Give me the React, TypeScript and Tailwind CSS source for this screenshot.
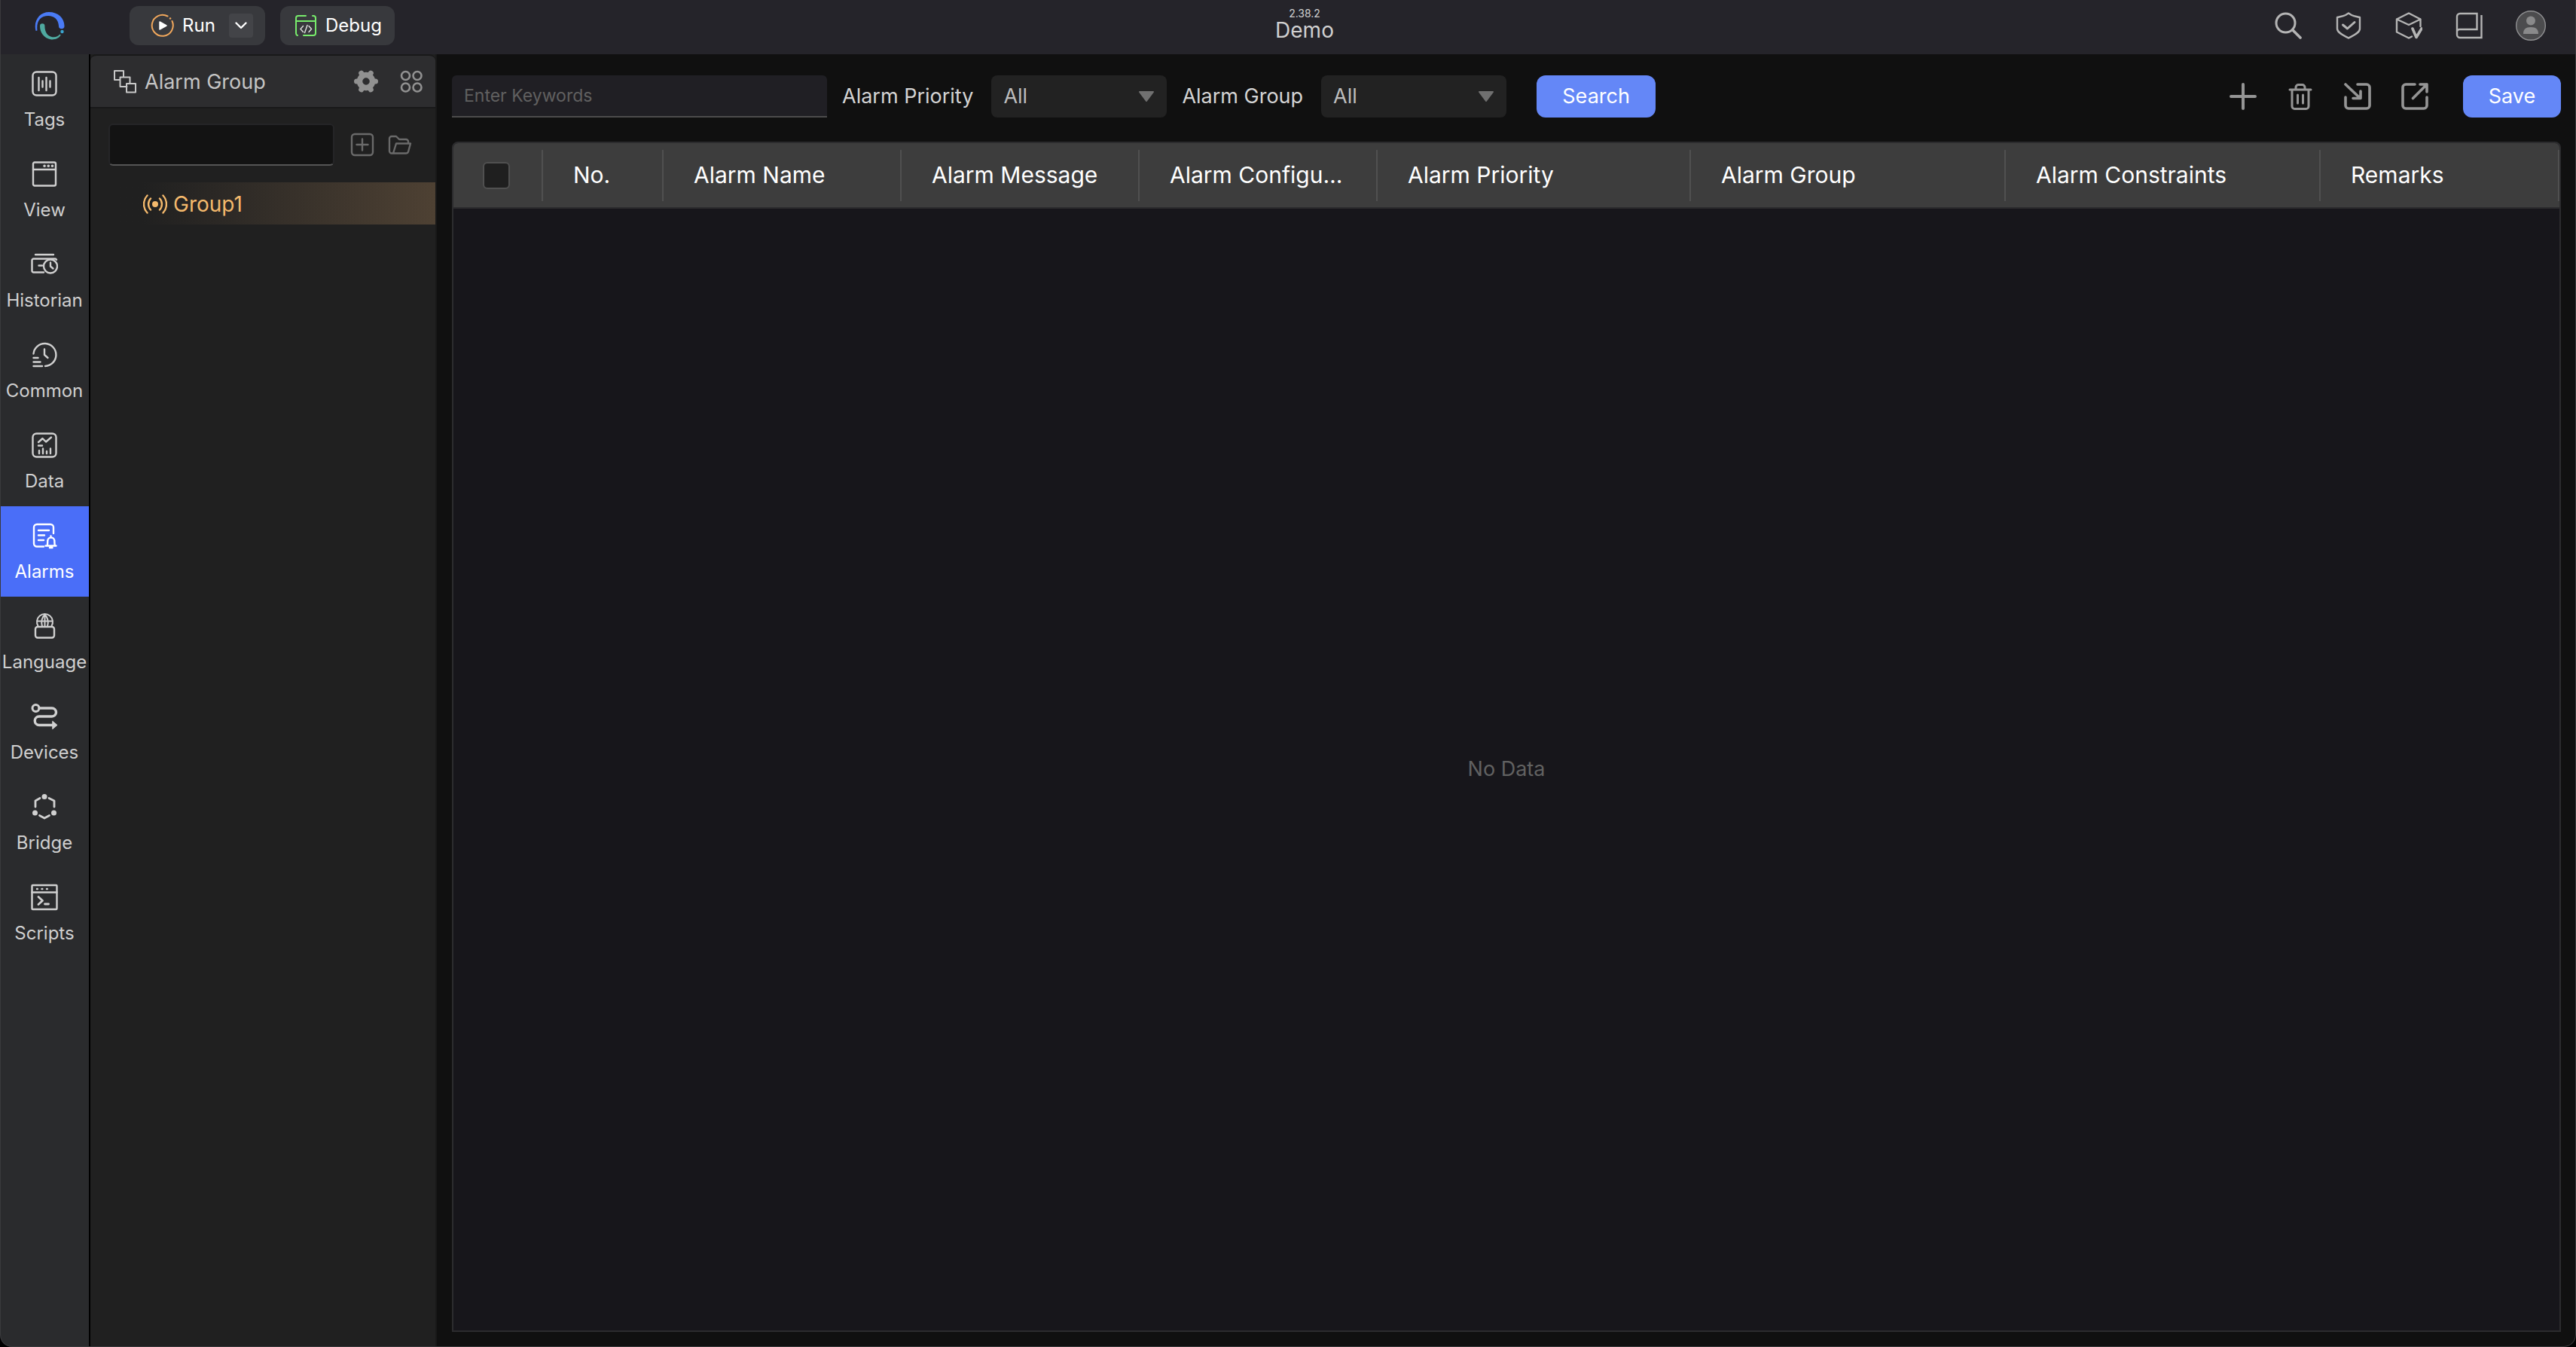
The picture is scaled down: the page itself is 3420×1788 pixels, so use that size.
import { ReactNode } from "react";

interface IconProps {
  className?: string;
  children: ReactNode;
  box?: string;
}

// Line icon on a 36px grid
function Icon({ className = "size-9", box = "0 0 36 36", children }: IconProps) {
  return (
    <svg
      viewBox={box}
      className={className}
      fill="none"
      stroke="currentColor"
      strokeWidth="2.4"
      strokeLinecap="round"
      strokeLinejoin="round"
      aria-hidden="true"
    >
      {children}
    </svg>
  );
}

const navItems: { label: string; icon: ReactNode }[] = [
  {
    label: "Tags",
    icon: (
      <>
        <rect x="2.5" y="2.5" width="31" height="31" rx="5" />
        <path d="M10.5 10v17M15.5 14.5v8M20.5 10v17M25.5 14.5v8" />
      </>
    ),
  },
  {
    label: "View",
    icon: (
      <>
        <rect x="3" y="2.5" width="30" height="31" rx="2" />
        <path d="M3 12h30" />
        <path d="M18 7.3h.1M23.2 7.3h.1M28.4 7.3h.1" strokeWidth="3.6" />
      </>
    ),
  },
  {
    label: "Historian",
    icon: (
      <>
        <path d="M6 5h24" />
        <path d="M17 28.5H3.5a2 2 0 0 1-2-2V12.5a2 2 0 0 1 2-2h28.500a2 2 0 0 1 2 1.200" />
        <circle cx="26" cy="20.5" r="9" />
        <path d="M26 15.5v5l3.500 3M10.500 19.500h4.500" />
      </>
    ),
  },
  {
    label: "Common",
    icon: (
      <>
        <path d="M3.500 16.500A15 15 0 1 1 19 33" />
        <path d="M18 10.500v7.500l4.500 4" />
        <path d="M3.500 22h6M3.500 27.500h9M3.500 33h11.500" />
      </>
    ),
  },
  {
    label: "Data",
    icon: (
      <>
        <rect x="2.5" y="2.5" width="31" height="31" rx="5" />
        <path d="M10 14l5.500-5 4.500 4.500 7-6M10 18.500h5" />
        <path d="M11 25v4M16 22.500v6.500M21 26v3M26 22.500v6.500" />
      </>
    ),
  },
  {
    label: "Alarms",
    icon: (
      <>
        <path d="M17 32.500H8a4 4 0 0 1-4-4V7a4 4 0 0 1 4-4h18a4 4 0 0 1 4 4v8" />
        <path d="M10 11h14M10 17.500h8M10 24h7" />
        <path d="M19.500 31.500h14M21.500 31.500c1-2 .500-4 .800-6.500a4.500 4.500 0 0 1 9 0c.3 2.500-.2 4.500.8 6.500M26.500 18.500v2M25 34h3.500" />
      </>
    ),
  },
  {
    label: "Language",
    icon: (
      <>
        <rect x="6" y="19" width="25" height="14.5" rx="3" />
        <g strokeWidth="2">
          <path d="M9.500 18a10.500 10.500 0 1 1 18 0" />
          <path d="M15 18.500c-1.500-6-.5-12 3.500-15.800 4 3.800 5 9.800 3.500 15.800M18.500 2.700v16M8.500 11.500h20" />
        </g>
      </>
    ),
  },
  {
    label: "Devices",
    icon: (
      <>
        <circle cx="6.5" cy="7" r="4.5" strokeWidth="3" />
        <path d="M11 7h17a5.300 5.300 0 0 1 0 11H11a5.500 5.500 0 0 0 0 11.500h18" strokeWidth="3.4" />
        <path d="M29 24.500l6 5-6 5z" fill="currentColor" strokeWidth="1" />
      </>
    ),
  },
  {
    label: "Bridge",
    icon: (
      <>
        <path d="M12 6.500l-6 3.500v8M24 6.500l7 3.500v8M11.500 29.500l6.500 3.500 6.500-3.500" strokeWidth="2.8" />
        <circle cx="18" cy="4.5" r="3.5" fill="currentColor" stroke="none" />
        <circle cx="5.5" cy="26" r="3.5" fill="currentColor" stroke="none" />
        <circle cx="30.5" cy="26" r="3.5" fill="currentColor" stroke="none" />
      </>
    ),
  },
  {
    label: "Scripts",
    icon: (
      <>
        <rect x="1.5" y="2" width="33" height="32" rx="1" />
        <path d="M1.500 11.500h33M8 7h.8M14.500 7h.8M21 7h.8" />
        <path d="M10 17.500l5.500 5-5.500 5M18.500 27h5" strokeWidth="2.8" />
      </>
    ),
  },
];

const columns = [
  { label: "No.", width: "w-40" },
  { label: "Alarm Name", width: "w-[316px]" },
  { label: "Alarm Message", width: "w-[316px]" },
  { label: "Alarm Configuration", width: "w-[316px]" },
  { label: "Alarm Priority", width: "w-[416px]" },
  { label: "Alarm Group", width: "w-[418px]" },
  { label: "Alarm Constraints", width: "w-[418px]" },
  { label: "Remarks", width: "" },
];

function TopBar() {
  return (
    <header className="flex h-[72px] shrink-0 items-center justify-between bg-[#25242a] pr-10 pb-1">
      <div className="flex flex-1 items-center">
        <svg viewBox="0 0 40 38" className="ml-[46px] h-[38px] w-10" fill="none" aria-hidden="true">
          <path d="M1.500 26C-2 12 7 1 19 1c12 0 20.500 8 20.500 18.500a3.500 3.500 0 0 1-7.500 0C31.500 11 26 6 18 6 8 6 2 13 3.500 25.500z" fill="#4a7bf5" />
          <path d="M7 19.500a3.200 3.200 0 0 1 6.400 0c0 8 3.600 13.500 10.100 14.700 4.500.6 7.500-1 10-3.700l1.200 1C32 36 27 37.800 22 37.400 12 36 7 28 7 19.500z" fill="#4fa9a0" />
          <circle cx="36.5" cy="27" r="2.2" fill="#3aa6d0" />
        </svg>
        <div className="ml-[86px] flex h-[52px] w-[180px] items-center rounded-xl bg-[#38393d] text-2xl text-white">
          <button type="button" className="flex flex-1 items-center gap-2.5 pl-7">
            <svg viewBox="0 0 32 32" className="size-8" fill="none" aria-hidden="true">
              <path d="M22.500 3.500A14 14 0 1 0 28.500 10" stroke="#f0a75c" strokeWidth="2" strokeLinecap="round" />
              <circle cx="26" cy="6.5" r="1.3" fill="#f0a75c" />
              <path d="M12 11v10l9-5z" fill="#fff" stroke="#fff" strokeWidth="1.5" strokeLinejoin="round" />
            </svg>
            Run
          </button>
          <button type="button" aria-label="Run options" className="mr-4 flex size-8 items-center justify-center rounded bg-[#434448]">
            <Icon className="size-5" box="0 0 20 20">
              <path d="M3.500 6.500l6.500 6.500 6.500-6.500" />
            </Icon>
          </button>
        </div>
        <button type="button" className="ml-5 flex h-[52px] w-38 items-center gap-3 rounded-xl bg-[#38393d] pl-5 text-2xl text-white">
          <svg viewBox="0 0 28 28" className="size-7" fill="none" strokeWidth="2" strokeLinecap="round" aria-hidden="true">
            <path d="M14 1H4a3 3 0 0 0-3 3v20a3 3 0 0 0 2 3M23 1h1a3 3 0 0 1 3 3v20a3 3 0 0 1-3 3H11M1 8h26" stroke="#78ec6c" />
            <path d="M10.500 14.500l-3.500 4 3.500 4M18 14.500l3.500 4-3.500 4M16 13.500l-3.500 10" stroke="#e4e4e4" strokeWidth="1.4" />
          </svg>
          Debug
        </button>
      </div>
      <div className="ml-[84px] flex flex-col items-center pb-1 text-[#d0d0d0]">
        <span className="text-sm leading-4">2.38.2</span>
        <h1 className="text-[28px] leading-7">Demo</h1>
      </div>
      <div className="flex flex-1 items-center justify-end gap-11 text-[#b4b4b4]">
        <button type="button" aria-label="Search">
          <Icon>
            <circle cx="14.5" cy="14.5" r="12.5" strokeWidth="3" />
            <path d="M24 24l10 10" strokeWidth="3.6" />
          </Icon>
        </button>
        <button type="button" aria-label="Security">
          <Icon>
            <path d="M18 1.500l4 2.500c3 1.500 7 2 11 3v15c0 6-9 9-15 12.500C12 31 3 28 3 22V7c4-1 8-1.500 11-3z" />
            <path d="M10.500 17l6 5 9.500-8.500" strokeWidth="3" />
          </Icon>
        </button>
        <button type="button" aria-label="Version">
          <Icon>
            <path d="M18 34.500L2 26.500V9.500l16-8 15.500 8V19M2 9.500l16 7.500 15.500-7.500M18 34.500l4-2" />
            <path d="M23 22l5 11.500 7-11.500" strokeWidth="3.6" />
          </Icon>
        </button>
        <button type="button" aria-label="Manual">
          <Icon>
            <path d="M34.500 4v30H6a4 4 0 0 1-4-4V6a4 4 0 0 1 4-4h22.500v21H6a3.500 3.500 0 0 0-4 4" strokeLinecap="butt" strokeLinejoin="miter" />
          </Icon>
        </button>
        <button type="button" aria-label="Account">
          <svg viewBox="0 0 40 40" className="size-10" aria-hidden="true">
            <circle cx="20" cy="20" r="19.3" fill="#4c4c4e" stroke="#909092" strokeWidth="1.4" />
            <circle cx="20" cy="13.5" r="6" fill="#8a8a8b" />
            <path d="M10 31c0-6 3-9 10-9s10 3 10 9z" fill="#8a8a8b" />
          </svg>
        </button>
      </div>
    </header>
  );
}

function SideNav() {
  return (
    <nav className="w-30 shrink-0 border-r-2 border-black bg-[#2a2b2d]">
      {navItems.map((item) => (
        <a
          key={item.label}
          href={`#${item.label.toLowerCase()}`}
          className={
            item.label === "Alarms"
              ? "flex h-30 flex-col items-center gap-4 bg-[#4a6ef8] pt-[21px] text-white"
              : "flex h-30 flex-col items-center gap-4 pt-[21px] text-[#d0d0d0]"
          }
        >
          <Icon>{item.icon}</Icon>
          <span className="text-2xl leading-7">{item.label}</span>
        </a>
      ))}
    </nav>
  );
}

function GroupPanel() {
  return (
    <aside className="w-[460px] shrink-0 border-r-2 border-[#191919] bg-[#202020]">
      <div className="flex h-[72px] items-center rounded-t-lg border-y-2 border-[#191919] bg-[#2d2d2f] pr-4 pl-[30px]">
        <Icon className="size-8 text-[#c8c8c8]" box="0 0 32 32">
          <path d="M8.500 14H2V2h12v7.500M18.500 23H9.500V10.500h13V18.500M18 19h12v11.500H18z" strokeWidth="2" />
        </Icon>
        <h2 className="ml-2.5 flex-1 pt-0.5 text-[27px] text-[#c4c4c4]">Alarm Group</h2>
        <button type="button" aria-label="Settings" className="text-[#919191]">
          <Icon className="size-8" box="0 0 32 32">
            <circle cx="16" cy="16" r="8.5" strokeWidth="7.5" />
            <path
              d="M27 16h1.500M3.500 16H5M21.500 25.500l.8 1.300M9.700 5.200l.8 1.300M10.500 25.500l-.8 1.300M22.300 5.200l-.8 1.300"
              strokeWidth="7"
            />
          </Icon>
        </button>
        <button type="button" aria-label="Layout" className="ml-7 text-[#919191]">
          <Icon className="size-8" box="0 0 32 32">
            <g strokeWidth="2.6">
              <circle cx="8.5" cy="8.5" r="5.5" />
              <circle cx="24" cy="8.5" r="5.5" />
              <circle cx="8.5" cy="24" r="5.5" />
              <circle cx="24" cy="24" r="5.5" />
            </g>
          </Icon>
        </button>
      </div>
      <div className="flex items-center pt-5 pl-6">
        <input
          type="text"
          aria-label="Filter groups"
          className="h-14 w-[300px] rounded-md border-2 border-x-[#252527] border-t-[#252527] border-b-[#555555] bg-[#131313] px-4 text-2xl text-[#c4c4c4]"
        />
        <button type="button" aria-label="Add group" className="ml-[21px] text-[#6a6a6a]">
          <Icon className="size-8" box="0 0 32 32">
            <rect x="2" y="2" width="28" height="28" rx="4" />
            <path d="M16 8.500v15M8.500 16h15" />
          </Icon>
        </button>
        <button type="button" aria-label="Open folder" className="ml-[18px] text-[#6a6a6a]">
          <Icon className="size-8" box="0 0 32 32">
            <path d="M7 27.500H5a3 3 0 0 1-3-3V8a3 3 0 0 1 3-3h6l4 4h9a3 3 0 0 1 3 3v2.500M7 27.500l4-13h19l-3 11a3 3 0 0 1-3 2z" />
          </Icon>
        </button>
      </div>
      <a
        href="#group1"
        className="mt-[22px] flex h-14 items-center gap-2 bg-linear-to-r from-[#202020] from-15% to-[#4e4133] pt-0.5 pl-[70px] text-[28px] text-[#f4b96c]"
      >
        <Icon className="size-8" box="0 0 32 32">
          <path d="M5.500 4.500a17 17 0 0 0 0 23M10 8.500a11 11 0 0 0 0 15M26.500 4.500a17 17 0 0 1 0 23M22 8.500a11 11 0 0 1 0 15" />
          <circle cx="16" cy="16" r="4" fill="currentColor" stroke="none" />
        </Icon>
        Group1
      </a>
    </aside>
  );
}

function FilterSelect({ id, label, width }: { id: string; label: string; width: string }) {
  return (
    <>
      <label htmlFor={id} className="text-[27px] whitespace-nowrap text-[#d4d4d4]">
        {label}
      </label>
      <div className={`relative ml-6 ${width}`}>
        <select
          id={id}
          className="h-14 w-full appearance-none rounded-lg bg-[#222222] pl-4 text-[27px] text-[#bdbdbd]"
        >
          <option>All</option>
        </select>
        <svg viewBox="0 0 22 14" className="pointer-events-none absolute top-[21px] right-4 h-3.5 w-[22px]" aria-hidden="true">
          <path d="M2 1h18l-9 12z" fill="#707070" stroke="#707070" strokeWidth="2" strokeLinejoin="round" />
        </svg>
      </div>
    </>
  );
}

function Toolbar() {
  return (
    <div className="flex items-center">
      <input
        type="text"
        aria-label="Enter Keywords"
        placeholder="Enter Keywords"
        className="mr-5 h-14 w-[498px] rounded-t-md border-b-2 border-[#4c4c4c] bg-[#201f24] px-4 text-[23px] text-[#d4d4d4] placeholder:text-[#606060]"
      />
      <FilterSelect id="priority" label="Alarm Priority" width="mr-5 w-[233px]" />
      <FilterSelect id="group" label="Alarm Group" width="mr-10 w-[246px]" />
      <button type="button" className="h-14 w-[158px] rounded-xl bg-[#6487f7] text-[27px] text-white">
        Search
      </button>
      <div className="ml-auto flex items-center gap-10 text-[#959595]">
        <button type="button" aria-label="Add">
          <Icon>
            <path d="M18 2v32M2 18h32" strokeWidth="4" />
          </Icon>
        </button>
        <button type="button" aria-label="Delete">
          <Icon>
            <path d="M4 9h28M12 9V6a3.500 3.500 0 0 1 3.500-3.500h5A3.500 3.500 0 0 1 24 6v3M7 9v22a3.500 3.500 0 0 0 3.500 3.500h15A3.500 3.500 0 0 0 29 31V9M14.500 16v11M21.500 16v11" strokeWidth="3" />
          </Icon>
        </button>
        <button type="button" aria-label="Import">
          <Icon>
            <path d="M18 2h12a4 4 0 0 1 4 4v24a4 4 0 0 1-4 4H6a4 4 0 0 1-4-4V19M2 2l19 18M22 11v9.500H12" strokeWidth="3.6" />
          </Icon>
        </button>
        <button type="button" aria-label="Export">
          <Icon>
            <path d="M18 2H6a4 4 0 0 0-4 4v24a4 4 0 0 0 4 4h24a4 4 0 0 0 4-4V19M15.500 20.500L34 2M25 2h9v10" strokeWidth="3.6" />
          </Icon>
        </button>
        <button type="button" className="ml-1.5 h-14 w-[130px] rounded-xl bg-[#6487f7] text-[27px] text-white">
          Save
        </button>
      </div>
    </div>
  );
}

function AlarmTable() {
  return (
    <div className="mt-8 flex flex-1 flex-col overflow-hidden rounded-t-lg border-2 border-[#2c2c2e] bg-[#17161b]">
      <table className="w-full table-fixed border-b-2 border-[#2c2c2e] bg-[#3d3d3d] text-left text-[30px] text-white">
        <thead>
          <tr className="h-[86px]">
            <th className="w-[119px] p-0 font-normal">
              <div className="flex h-[68px] items-center justify-center border-r-2 border-[#505050] pr-1">
                <input
                  type="checkbox"
                  aria-label="Select all alarms"
                  className="size-9 appearance-none rounded-md border-2 border-[#505050] bg-[#1f1f1f]"
                />
              </div>
            </th>
            {columns.map((col) => (
              <th key={col.label} className={`p-0 font-normal ${col.width}`}>
                <div className="flex h-[68px] items-center border-r-2 border-[#505050] pr-9 pl-10">
                  <span className="truncate">{col.label}</span>
                </div>
              </th>
            ))}
          </tr>
        </thead>
      </table>
      <div className="flex flex-1 items-center justify-center text-[27px] text-[#616161]">No Data</div>
    </div>
  );
}

export default function App() {
  return (
    <div className="bg-black">
      <div className="relative flex h-screen flex-col overflow-hidden rounded-b-2xl bg-[#101010] font-['Inter',sans-serif]">
        <TopBar />
        <div className="flex min-h-0 flex-1">
          <SideNav />
          <GroupPanel />
          <main className="flex min-w-0 flex-1 flex-col px-5 pt-7 pb-5">
            <Toolbar />
            <AlarmTable />
          </main>
        </div>
        {/* Window edge */}
        <div className="pointer-events-none absolute inset-0 rounded-b-2xl border border-t-0 border-[#3a3a3c]" />
      </div>
    </div>
  );
}
